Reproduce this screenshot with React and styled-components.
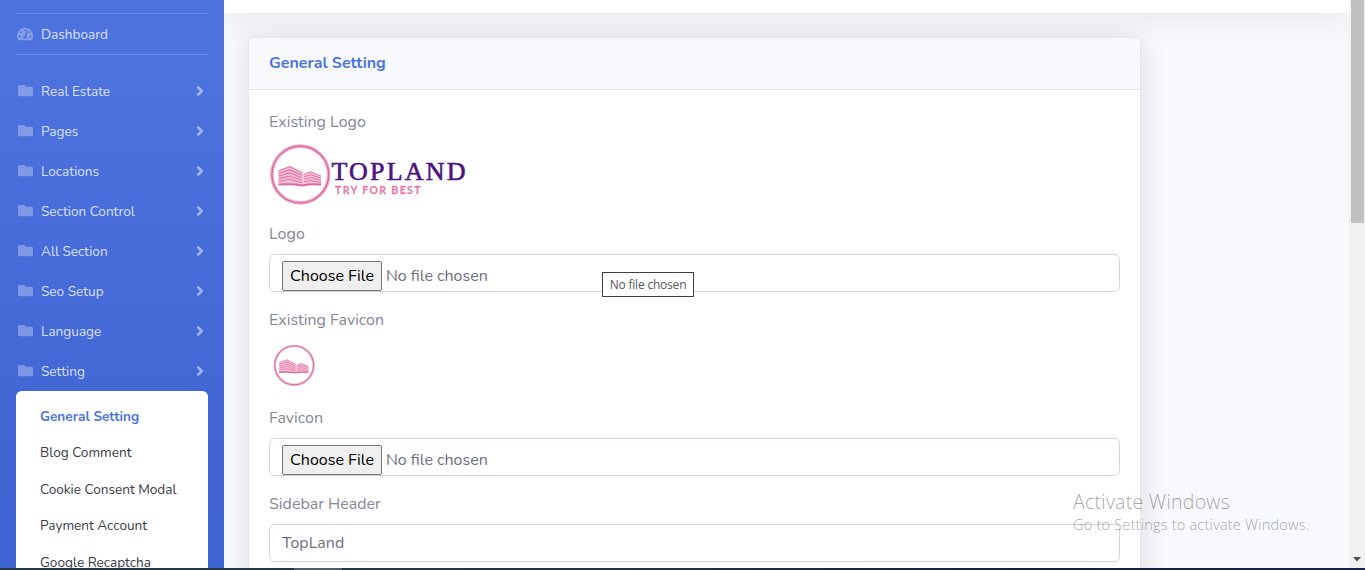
import React from 'react';
import styled, { createGlobalStyle } from 'styled-components';
import { FaTachometerAlt, FaFolder, FaAngleRight } from 'react-icons/fa';

const Global = createGlobalStyle`
  * { box-sizing: border-box; }
  html, body { margin: 0; height: 100%; overflow: hidden; }
  body { font: 400 16px/1.5 Nunito, Lato, sans-serif; color: #858796; background: #f8f9fc; }
`;
const Screen = styled.div`
  position: relative; display: flex; flex-direction: column; width: 1365px; height: 570px; overflow: hidden;
`;
const Viewport = styled.div`display: flex; height: 568px; overflow: hidden;`;
const Sidebar = styled.nav`
  flex: 0 0 224px; padding-top: 13px; overflow: hidden;
  background: linear-gradient(180deg, #4e73df 0, #4d72de 80px, #3d62d1 568px);
`;
const Divider = styled.div`height: 1px; margin: 0 16px ${p => p.$gap || 0}px; background: rgba(255,255,255,.15);`;
const NavItem = styled.div`
  display: flex; align-items: center; height: 40px; padding: 0 16px;
  font-size: 13.6px; color: rgba(255,255,255,.8);
  svg { flex: none; color: rgba(255,255,255,.3); }
`;
const NavText = styled.span`padding-top: 2px;`;
const IconBox = styled.span`display: flex; justify-content: center; width: 18px; margin-right: 7px; padding-bottom: 1px;`;
const Arrow = styled(FaAngleRight)`
  && { color: rgba(255,255,255,.5); margin-left: auto; }
`;
const SubMenu = styled.div`margin: 0 16px; padding: 8px 0; background: #fff; border-radius: 5.6px;`;
const SubItem = styled.div`
  height: 36.4px; padding: 8px 24px; font-size: 13.6px; line-height: 20.4px; white-space: nowrap;
  color: ${p => (p.$active ? '#4e73df' : '#3a3b45')}; font-weight: ${p => (p.$active ? 700 : 400)};
`;
const Content = styled.main`flex: 1; overflow: hidden; background: #f8f9fc;`;
const Topbar = styled.div`height: 13px; background: #fff; box-shadow: 0 2.4px 28px rgba(58,59,69,.15);`;
const Card = styled.section`
  width: 893px; height: 700px; margin: 24px 0 0 24px; background: #fff; border: 1px solid #e3e6f0; border-radius: 5.6px;
  box-shadow: 0 2.4px 28px rgba(58,59,69,.15);
`;
const CardHeader = styled.h6`
  margin: 0; height: 52px; padding: 0 20px 2px; display: flex; align-items: center; font-size: 16px; font-weight: 700;
  color: #4e73df; background: #f8f9fc; border-bottom: 1px solid #e3e6f0; border-radius: 5px 5px 0 0;
`;
const CardBody = styled.div`padding: 20px;`;
const Group = styled.div`margin-bottom: 16px;`;
const Label = styled.div`height: 24px; margin-bottom: 8px;`;
const Field = styled.div`
  height: 38px; padding: 6px 12px; border: 1px solid #d1d3e2; border-radius: 5.6px; background: #fff;
  color: #6e707e; display: flex; overflow: hidden;
`;
const FileButton = styled.span`
  flex: none; width: 100px; height: 30px; border: 1px solid #767676; border-radius: 2px; background: #efefef; color: #000;
  text-align: center; line-height: 28px; margin-right: 4px;
`;
const FileName = styled.span`line-height: 30px;`;
const Picture = styled.svg`display: block; overflow: visible;`;
const Scrollbar = styled.div`flex: 0 0 16px; display: flex; flex-direction: column; justify-content: space-between; align-items: center; background: #f1f1f1;`;
const Thumb = styled.div`width: 13px; height: 223px; background: #c1c1c1;`;
const DownArrow = styled.svg`display: block; margin-bottom: 6px;`;
const Taskbar = styled.div`
  height: 2px; display: flex; padding-left: 294px;
  background: linear-gradient(90deg, #263a45, #20333f 45%, #15203a 75%, #172445);
`;
const TaskButton = styled.div`width: 48px; background: #4d5c66;`;
const Tooltip = styled.div`
  position: absolute; left: 602px; top: 272px; width: 92px; height: 25px; border: 1px solid #3f3f3f; background: #fff;
  font: 12px/24px "Open Sans", sans-serif; letter-spacing: -.2px; color: #575757; text-align: center; white-space: nowrap;
`;
const Watermark = styled.div`
  position: absolute; left: 1073px; top: 489px; color: rgba(80,80,80,.52); white-space: nowrap;
  font-family: "Open Sans", sans-serif;
`;
const WatermarkTitle = styled.div`font-size: 19.5px; font-weight: 300; line-height: 26px; letter-spacing: .25px;`;
const WatermarkText = styled.div`font-size: 14.5px; font-weight: 300; line-height: 20px; letter-spacing: .22px;`;

function Emblem() {
  return (
    <g fill="none" stroke="#e07aab">
      <circle cx="31.3" cy="32.5" r="28.4" stroke="#efabc9" strokeWidth="3.6" />
      <circle cx="31.3" cy="32.5" r="28.4" stroke="#d5699c" strokeWidth="1.2" />
      <path d="M9.5 28.5 21 24 33.5 31V43.500Q21 42 9.5 43Z" fill="#f4bdd5" stroke="none" />
      <path d="M34.500 32.500 41.500 29.500 52 34V43Q43 42 34.500 43.500Z" fill="#f4bdd5" stroke="none" />
      {[0, 1, 2, 3, 4].map(i => (
        <path key={i} strokeWidth="1.1" d={`M9.5 ${28.8 + i * 2.6} L21 ${24.5 + i * 3.2} L33.5 ${31 + i * 2.5}`} />
      ))}
      {[0, 1, 2, 3].map(i => (
        <path key={i} strokeWidth="1" d={`M34.5 ${32.5 + i * 2.5} L41.5 ${29.8 + i * 2.9} L52 ${34 + i * 2.2}`} />
      ))}
      <path d="M9.5 42.600Q22 41.500 33.5 43.400Q43 41.500 52 42.700" stroke="#dc6ca2" strokeWidth="2" />
    </g>
  );
}

const sections = ['Real Estate', 'Pages', 'Locations', 'Section Control', 'All Section', 'Seo Setup', 'Language', 'Setting'];
const subs = ['General Setting', 'Blog Comment', 'Cookie Consent Modal', 'Payment Account', 'Google Recaptcha'];

function FileField() {
  return <Field><FileButton>Choose File</FileButton><FileName>No file chosen</FileName></Field>;
}

export default function App() {
  return (
    <Screen>
      <Global />
      <Viewport>
        <Sidebar>
          <Divider />
          <NavItem><IconBox><FaTachometerAlt size={16} /></IconBox><NavText>Dashboard</NavText></NavItem>
          <Divider $gap={16} />
          {sections.map(t => (
            <NavItem key={t}><IconBox><FaFolder size={15} /></IconBox><NavText>{t}</NavText><Arrow size={16} /></NavItem>
          ))}
          <SubMenu>
            {subs.map((t, i) => <SubItem key={t} $active={i === 0}>{t}</SubItem>)}
          </SubMenu>
        </Sidebar>
        <Content>
          <Topbar />
          <Card>
            <CardHeader>General Setting</CardHeader>
            <CardBody>
              <Group>
                <Label>Existing Logo</Label>
                <Picture width="200" height="64" viewBox="0 0 200 64">
                  <Emblem />
                  <text x="62.5" y="37.5" fontFamily="Liberation Serif, serif" fontSize="26" stroke="#4b1480" strokeWidth=".6" fill="#4b1480" textLength="134">TOPLAND</text>
                  <text x="66" y="51.5" fontFamily="Lato, sans-serif" fontWeight="700" fontSize="10.5" stroke="#e07fac" strokeWidth=".3" fill="#e07fac" textLength="85.5">TRY FOR BEST</text>
                </Picture>
              </Group>
              <Group><Label>Logo</Label><FileField /></Group>
              <Group>
                <Label>Existing Favicon</Label>
                <Picture width="50" height="50" viewBox="-5.5 -4.5 73 73"><Emblem /></Picture>
              </Group>
              <Group><Label>Favicon</Label><FileField /></Group>
              <Group><Label>Sidebar Header</Label><Field>TopLand</Field></Group>
            </CardBody>
          </Card>
        </Content>
        <Scrollbar>
          <Thumb />
          <DownArrow width="8" height="5"><path d="M0 0h8L4 4.5z" fill="#505050" /></DownArrow>
        </Scrollbar>
      </Viewport>
      <Taskbar><TaskButton /></Taskbar>
      <Tooltip>No file chosen</Tooltip>
      <Watermark>
        <WatermarkTitle>Activate Windows</WatermarkTitle>
        <WatermarkText>Go to Settings to activate Windows.</WatermarkText>
      </Watermark>
    </Screen>
  );
}
